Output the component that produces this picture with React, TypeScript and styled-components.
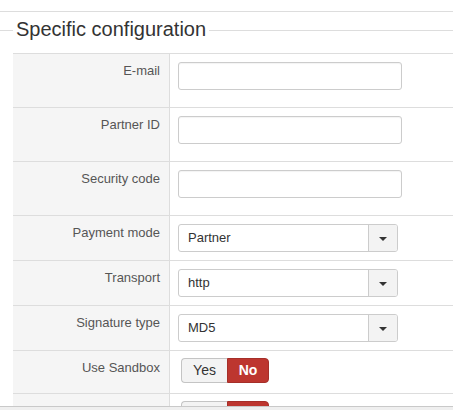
import React from 'react';
import styled, { createGlobalStyle, css } from 'styled-components';

const GlobalStyle = createGlobalStyle`
  body {
    margin: 0;
    background: #fff;
    font-family: "Liberation Sans", Arial, sans-serif;
    font-size: 13px;
    color: #333;
    overflow: hidden;
  }
`;

const Page = styled.div`
  padding-top: 11px;
`;

const TopRule = styled.div`
  border-top: 1px solid #ddd;
`;

const LegendRow = styled.div`
  display: flex;
  height: 41px;
`;

const Rule = styled.div<{ $grow?: boolean }>`
  flex: ${(p) => (p.$grow ? '1 1 auto' : '0 0 13px')};
  height: 0;
  margin-top: 18px;
  border-top: 1px solid #ddd;
`;

const Legend = styled.h2`
  margin: 0;
  padding: 5px 3px 0;
  font-size: 20px;
  line-height: 24px;
  font-weight: normal;
  color: #333;
  white-space: nowrap;
`;

const Table = styled.div`
  margin-left: 13px;
  display: flex;
  flex-direction: column;
`;

const Row = styled.div`
  display: grid;
  grid-template-columns: 157px 1fr;
  border-top: 1px solid #ddd;
`;

const Label = styled.div`
  box-sizing: border-box;
  background: #f5f5f5;
  border-right: 1px solid #ddd;
  padding: 8px 9px;
  text-align: right;
  color: #555;
  line-height: 18px;
`;

const Value = styled.div`
  padding: 8px;
  display: flex;
  align-items: flex-start;
`;

const TextInput = styled.input`
  box-sizing: border-box;
  width: 224px;
  height: 28px;
  margin: 0 0 9px;
  padding: 4px 10px;
  border: 1px solid #ccc;
  border-radius: 3px;
  background: #fff;
  box-shadow: inset 0 1px 1px rgba(0, 0, 0, 0.05);
  font: inherit;
`;

const Select = styled.div`
  box-sizing: border-box;
  width: 220px;
  height: 28px;
  display: flex;
  border: 1px solid #ccc;
  border-radius: 3px;
  background: #fff;
  overflow: hidden;
`;

const SelectText = styled.span`
  flex: 1;
  padding-left: 9px;
  line-height: 26px;
  color: #333;
`;

const SelectArrow = styled.span`
  width: 28px;
  display: flex;
  align-items: center;
  justify-content: center;
  border-left: 1px solid #ccc;
  background: #f3f3f3;

  &::after {
    content: '';
    border-top: 4px solid #333;
    border-left: 4px solid transparent;
    border-right: 4px solid transparent;
    margin-top: 1px;
  }
`;

const Toggle = styled.div`
  display: flex;
  margin: -1px 0 2px 3px;
`;

const ToggleButton = styled.span<{ $active?: boolean; $first?: boolean }>`
  box-sizing: border-box;
  height: 25px;
  line-height: 23px;
  text-align: center;
  font-size: 14px;
  ${(p) =>
    p.$active
      ? css`
          width: 42px;
          background: #bd362f;
          border: 1px solid #a52f29;
          color: #fff;
          font-weight: bold;
          border-radius: 0 4px 4px 0;
        `
      : css`
          width: 46px;
          background: #f3f3f3;
          border: 1px solid #c4c4c4;
          border-right: none;
          color: #333;
          border-radius: 4px 0 0 4px;
        `}
`;

const BottomEdge = styled.div`
  position: fixed;
  left: 0;
  right: 0;
  bottom: 0;
  height: 3px;
  border-top: 1px solid #c9c9c9;
  background: #efefef;
`;

type Field =
  | { label: string; kind: 'text' }
  | { label: string; kind: 'select'; value: string }
  | { label: string; kind: 'toggle' };

const fields: Field[] = [
  { label: 'E-mail', kind: 'text' },
  { label: 'Partner ID', kind: 'text' },
  { label: 'Security code', kind: 'text' },
  { label: 'Payment mode', kind: 'select', value: 'Partner' },
  { label: 'Transport', kind: 'select', value: 'http' },
  { label: 'Signature type', kind: 'select', value: 'MD5' },
  { label: 'Use Sandbox', kind: 'toggle' },
  { label: 'Separate Server', kind: 'toggle' },
];

const renderControl = (field: Field) => {
  if (field.kind === 'text') return <TextInput type="text" />;
  if (field.kind === 'select')
    return (
      <Select>
        <SelectText>{field.value}</SelectText>
        <SelectArrow />
      </Select>
    );
  return (
    <Toggle>
      <ToggleButton>Yes</ToggleButton>
      <ToggleButton $active>No</ToggleButton>
    </Toggle>
  );
};

const App: React.FC = () => (
  <Page>
    <GlobalStyle />
    <TopRule />
    <LegendRow>
      <Rule />
      <Legend>Specific configuration</Legend>
      <Rule $grow />
    </LegendRow>
    <Table>
      {fields.map((field) => (
        <Row key={field.label}>
          <Label>{field.label}</Label>
          <Value>{renderControl(field)}</Value>
        </Row>
      ))}
    </Table>
    <BottomEdge />
  </Page>
);

export default App;
